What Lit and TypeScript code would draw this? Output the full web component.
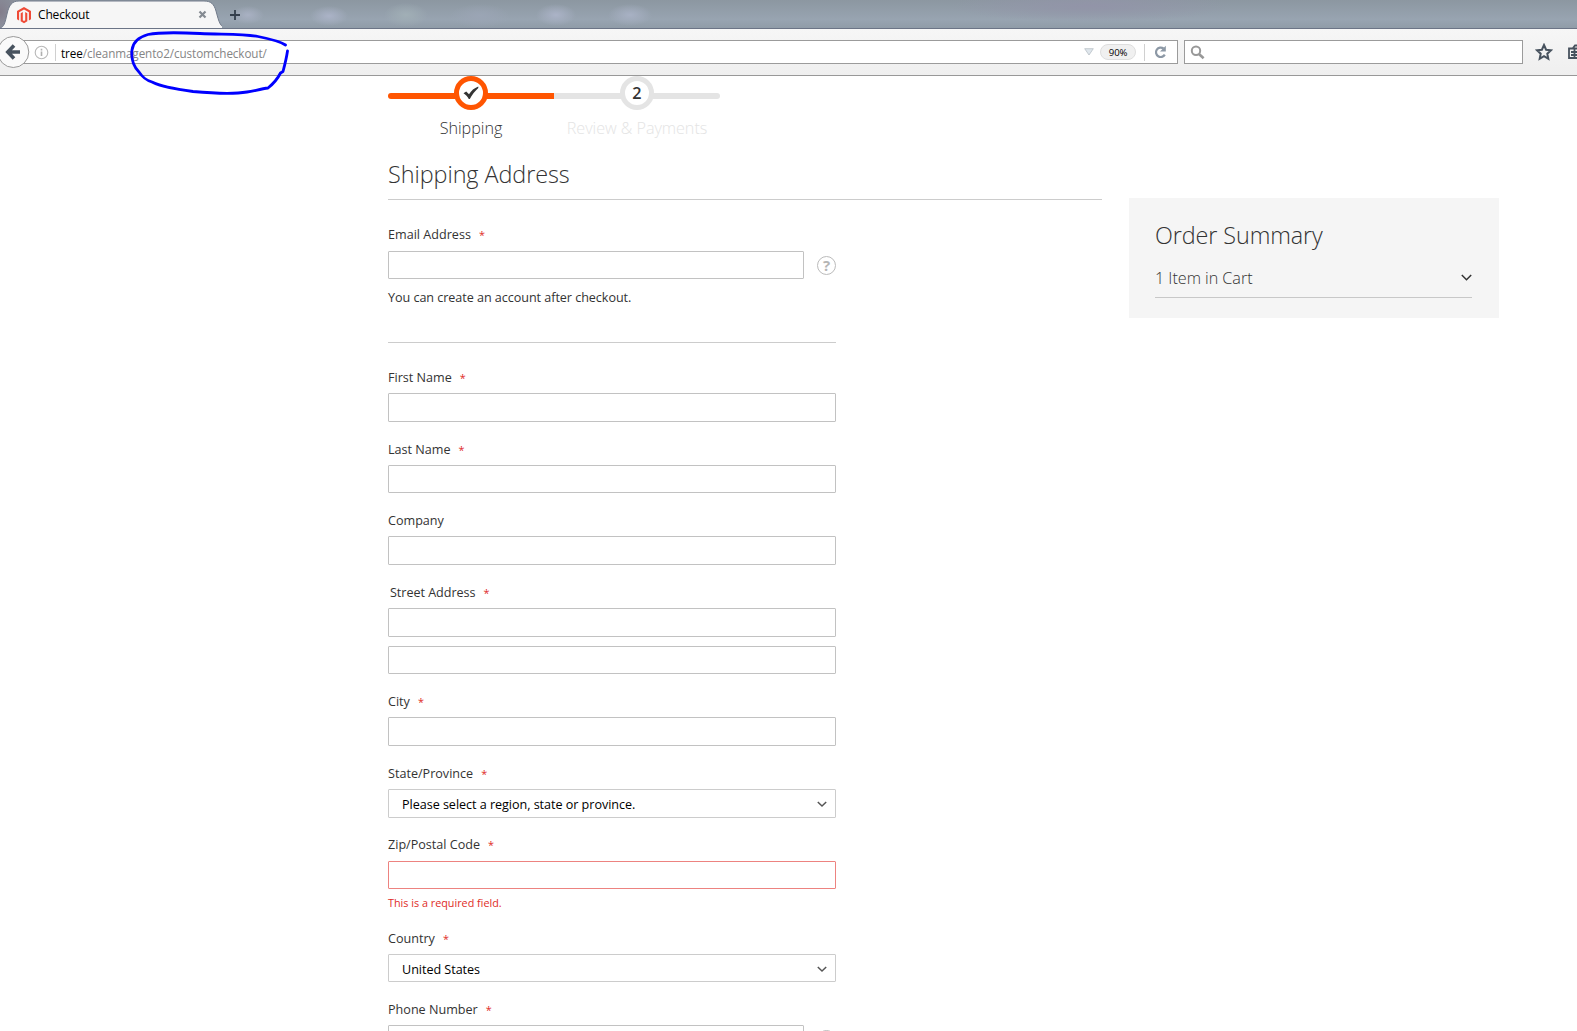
import { LitElement, html, css, nothing } from "lit";
import { customElement, property } from "lit/decorators.js";

@customElement("browser-chrome")
class BrowserChrome extends LitElement {
  static styles = css`
    :host { display: block; font-family: "Open Sans", "Noto Sans", sans-serif; font-size: 12px; color: #000; }
    .tabs {
      height: 28px; display: flex; overflow: hidden; border-bottom: 1px solid #6b7486;
      background:
        radial-gradient(ellipse 16px 9px at 248px 15px, #a9b1c3, transparent),
        radial-gradient(ellipse 19px 10px at 329px 16px, #abb3c7, transparent),
        radial-gradient(ellipse 22px 12px at 406px 15px, #a1afb6, transparent),
        radial-gradient(ellipse 30px 12px at 480px 16px, #9ba5b5, transparent),
        radial-gradient(ellipse 20px 11px at 556px 15px, #abb3c7, transparent),
        radial-gradient(ellipse 22px 11px at 630px 15px, #a8b1c4, transparent),
        radial-gradient(ellipse 140px 16px at 1090px 6px, #9294a8, transparent),
        radial-gradient(ellipse 24px 28px at 0px 12px, #827d8b, transparent),
        linear-gradient(#8c97a1, #98a4b1 70%, #909ca8);
    }
    .tab { width: 222px; height: 29px; flex: none; display: grid; }
    .tab > * { grid-area: 1 / 1; }
    .tabrow { display: flex; align-items: center; padding: 1px 15px 0 16px; height: 28px; box-sizing: border-box; z-index: 1; }
    .tabname { margin-left: 6px; flex: 1; letter-spacing: -0.15px; line-height: 18px; }
    .plus { margin: 9px 0 0 7px; }
    .bar {
      height: 46px; display: flex; align-items: center; border-bottom: 1px solid #989898;
      background: linear-gradient(#f6f6f6, #efefef); overflow: hidden;
    }
    .back { flex: none; margin-left: -4px; width: 34px; height: 34px; z-index: 1; }
    .url {
      flex: none; width: 1160px; height: 24px; box-sizing: border-box; margin-left: -12px; padding-left: 15px;
      border: 1px solid #9b9b9b; background: #fff; display: flex; align-items: center;
    }
    .sep { width: 1px; height: 17px; background: #d0d0d0; }
    .lead { margin-left: 6px; }
    .address { margin-left: 5px; padding-top: 1px; flex: 1; color: #858585; font-size: 11.7px; letter-spacing: -0.09px; white-space: nowrap; }
    .address b { font-weight: 400; color: #000; }
    .zoom {
      box-sizing: border-box; width: 36px; height: 16px; border: 1px solid #dedede; border-radius: 8px; background: #f0f0f0;
      font-size: 9.6px; line-height: 15px; text-align: center; letter-spacing: -0.2px; margin: 0 8px 0 6px;
    }
    .reload { margin: 0 9px 0 8px; }
    .search {
      flex: none; margin-left: 6px; width: 339px; height: 24px; box-sizing: border-box; border: 1px solid #9b9b9b;
      background: #fff; display: flex; align-items: center; padding-left: 5px;
    }
    .star { flex: none; margin: 0 7px 0 12px; }
    .clip { flex: none; margin-left: 8px; }
    svg { display: block; }
  `;
  render() {
    return html`
      <div class="tabs">
        <div class="tab">
          <svg width="222" height="29">
            <path d="M0 29V28C4 27 5 23 7 14C9 5 12 1 19 1H204C211 1 214 4 216 11C219 22 220 28 228 28.500V29Z" fill="#f6f6f6" stroke="#727b8b"/>
          </svg>
          <div class="tabrow">
            <svg width="16" height="18" viewBox="16 6 16 18">
              <path d="M24 7L31 11V19.300L28.900 20.500V12.200L24 9.400L19.100 12.200V20.500L17 19.300V11Z" fill="#ef4a36"/>
              <path d="M20.700 13.200L22.800 12V20.300L24 21L25.200 20.300V12L27.300 13.200V21.300L24 23.200L20.700 21.300Z" fill="#ef4a36"/>
            </svg>
            <span class="tabname">Checkout</span>
            <svg width="9" height="9"><path d="M1.500 1.500L7.500 7.500M7.500 1.500L1.500 7.500" stroke="#848a91" stroke-width="2.200"/></svg>
          </div>
        </div>
        <svg class="plus" width="12" height="12"><path d="M6 1V11M1 6H11" stroke="#343f4c" stroke-width="1.800"/></svg>
      </div>
      <div class="bar">
        <svg class="back" viewBox="0 0 34 34">
          <circle cx="17.300" cy="17" r="15.500" fill="#fafafa" stroke="#9a9a9a"/>
          <path d="M18 10.500L11.800 17L18 23.500M12.500 17H24" fill="none" stroke="#48535f" stroke-width="3.600"/>
        </svg>
        <div class="url">
          <svg width="15" height="15"><circle cx="7.500" cy="7.500" r="6.300" fill="none" stroke="#b8b8b8" stroke-width="1.100"/><path d="M7.500 6.500V11M7.500 3.800V5.400" stroke="#b0b0b0" stroke-width="1.600"/></svg>
          <div class="sep lead"></div>
          <span class="address"><b>tree</b>/cleanmagento2/customcheckout/</span>
          <svg width="10" height="8"><path d="M.7 .7H9.300L5 7Z" fill="#dfe6ec" stroke="#b8bfc5" stroke-width=".8"/></svg>
          <span class="zoom">90%</span>
          <div class="sep"></div>
          <svg class="reload" width="15" height="14"><path d="M11.800 9.600A4.700 4.700 0 1 1 10.500 3.500" fill="none" stroke="#8c98a5" stroke-width="2.200"/><path d="M12.800 .8V6.600H7Z" fill="#8c98a5"/></svg>
        </div>
        <div class="search">
          <svg width="15" height="15"><circle cx="6" cy="5.800" r="4.200" fill="none" stroke="#989898" stroke-width="2"/><path d="M9 9L13.600 13.300" stroke="#989898" stroke-width="2.600"/></svg>
        </div>
        <svg class="star" width="18" height="18"><path d="M9 2L11.100 6.700L16 7.200L12.300 10.700L13.300 15.800L9 13.200L4.700 15.800L5.700 10.700L2 7.200L6.900 6.700Z" fill="none" stroke="#47525e" stroke-width="2"/></svg>
        <div class="sep"></div>
        <svg class="clip" width="16" height="16"><path d="M1 4.500H14V14H1ZM3 8H14M3 11H14M6.500 5V14M5 4L7 1.500H10" fill="none" stroke="#47525e" stroke-width="1.800"/></svg>
      </div>`;
  }
}

@customElement("checkout-field")
class CheckoutField extends LitElement {
  @property() label = "";
  @property({ type: Boolean }) required = false;
  @property({ type: Boolean }) tall = false;
  @property({ type: Boolean }) raised = false;
  @property({ type: Boolean }) second = false;
  @property({ type: Boolean }) legend = false;
  @property() value = "";
  @property() error = "";
  static styles = css`
    :host { display: block; font-family: "Open Sans", sans-serif; font-size: 12.6px; color: #333; }
    .label { line-height: 18px; height: 18px; padding: 1px 0 6px; }
    .raised { padding: 0 0 7px; }
    .legend { padding-left: 2px; letter-spacing: -0.04px; }
    .star { color: #e02b27; font-size: 10.8px; margin-left: 8px; }
    .row { display: flex; align-items: center; gap: 13px; }
    .box {
      flex: 1; box-sizing: border-box; height: 28px; border: 1px solid #c2c2c2; border-radius: 1px; background: #fff;
      display: flex; align-items: center; justify-content: space-between; padding: 2px 8px 0 13px; color: #000; letter-spacing: -0.04px;
    }
    .tall { height: 29px; padding-top: 1px; }
    .select { border-color: #ccc; }
    .bad { border-color: #ed8380; }
    .extra { margin-top: 9px; }
    .error { color: #e02b27; font-size: 10.8px; line-height: 16px; padding-top: 6px; }
    svg { display: block; }
  `;
  render() {
    const cls = `box ${this.tall ? "tall" : ""} ${this.value ? "select" : ""} ${this.error ? "bad" : ""}`;
    return html`
      <div class="label ${this.legend ? "legend" : ""} ${this.raised ? "raised" : ""}">${this.label}${this.required ? html`<span class="star">*</span>` : nothing}</div>
      <div class="row">
        <div class=${cls}>${this.value
          ? html`<span>${this.value}</span><svg width="10" height="7"><path d="M.8 1L5 5L9.200 1" fill="none" stroke="#555" stroke-width="1.500"/></svg>`
          : nothing}</div>
        <slot></slot>
      </div>
      ${this.second ? html`<div class="box extra"></div>` : nothing}
      ${this.error ? html`<div class="error">${this.error}</div>` : nothing}`;
  }
}

@customElement("app-root")
class AppRoot extends LitElement {
  static styles = css`
    :host { display: block; position: relative; width: 1577px; height: 1031px; overflow: hidden; background: #fff; font-family: "Open Sans", sans-serif; color: #333; }
    .page { display: flex; padding-left: 388px; align-items: flex-start; }
    .main { width: 714px; }
    .steps { display: flex; height: 68px; margin-bottom: 16px; }
    .step { width: 166px; display: flex; flex-direction: column; align-items: center; font-size: 16.2px; font-weight: 300; }
    .track { width: 166px; height: 34px; display: grid; justify-items: center; align-items: center; }
    .track > * { grid-area: 1 / 1; }
    .line { width: 100%; height: 6px; margin-top: 6px; background: #e4e4e4; border-radius: 0 6px 6px 0; }
    .dot { box-sizing: border-box; width: 34px; height: 34px; border: 5px solid #e4e4e4; background: #fff; border-radius: 50%; display: grid; place-items: center; font-weight: 600; font-size: 16.200px; line-height: 22px; }
    .on .line { background: #ff5501; border-radius: 6px 0 0 6px; }
    .on .dot { border-color: #ff5501; }
    .name { line-height: 22px; margin-top: 7px; white-space: nowrap; letter-spacing: -0.05px; }
    .todo .name { color: #e4e4e4; }
    h1 { font-weight: 300; font-size: 23.400px; letter-spacing: -0.06px; line-height: 28px; margin: 0; padding-bottom: 11px; border-bottom: 1px solid #ccc; }
    .form { width: 448px; display: flex; flex-direction: column; gap: 18px; }
    .email { padding-top: 26px; height: 143px; box-sizing: border-box; border-bottom: 1px solid #ccc; margin-bottom: 7px; }
    .note { font-size: 12.600px; line-height: 18px; margin-top: 10px; letter-spacing: -0.05px; }
    .help {
      box-sizing: border-box; width: 19px; height: 19px; flex: none; border: 1.500px solid #bbb; border-radius: 50%;
      color: #b5b5b5; font-weight: 700; font-size: 15px; line-height: 17px; text-align: center;
    }
    .summary { margin: 122px 0 0 27px; width: 370px; height: 120px; box-sizing: border-box; background: #f5f5f5; padding: 21px 27px 0 26px; }
    .title { font-size: 23.400px; font-weight: 300; line-height: 32px; letter-spacing: -0.1px; }
    .cart { display: flex; justify-content: space-between; align-items: center; font-size: 16.200px; letter-spacing: -0.04px; font-weight: 300; line-height: 24px; height: 47px; box-sizing: border-box; padding: 7px 0 0; border-bottom: 1px solid #c8c8c8; }
    .ink { position: absolute; left: 0; top: 0; pointer-events: none; z-index: 2; }
    svg { display: block; }
  `;
  render() {
    return html`
      <browser-chrome></browser-chrome>
      <div class="page">
        <div class="main">
          <div class="steps">
            <div class="step on">
              <div class="track"><div class="line"></div><div class="dot">
                <svg width="16" height="14"><path d="M.5 7.200L3.200 5.400L6 8.300C8.500 4.600 11 2.300 15.300 .6V2C12 5 9 8.800 6.800 13H5.800C4.500 10.600 2.800 8.600 .5 7.200Z" fill="#333"/></svg>
              </div></div>
              <div class="name">Shipping</div>
            </div>
            <div class="step todo">
              <div class="track"><div class="line"></div><div class="dot">2</div></div>
              <div class="name">Review &amp; Payments</div>
            </div>
          </div>
          <h1>Shipping Address</h1>
          <div class="form">
            <div class="email">
              <checkout-field label="Email Address" required raised><div class="help">?</div></checkout-field>
              <div class="note">You can create an account after checkout.</div>
            </div>
            <checkout-field label="First Name" required tall></checkout-field>
            <checkout-field label="Last Name" required></checkout-field>
            <checkout-field label="Company" tall></checkout-field>
            <checkout-field label="Street Address" required tall legend second></checkout-field>
            <checkout-field label="City" required tall></checkout-field>
            <checkout-field label="State/Province" required tall value="Please select a region, state or province."></checkout-field>
            <checkout-field label="Zip/Postal Code" required raised error="This is a required field."></checkout-field>
            <checkout-field label="Country" required value="United States"></checkout-field>
            <checkout-field label="Phone Number" required><div class="help"></div></checkout-field>
          </div>
        </div>
        <div class="summary">
          <div class="title">Order Summary</div>
          <div class="cart"><span>1 Item in Cart</span><svg width="11" height="8"><path d="M.8 1L5.500 5.700L10.200 1" fill="none" stroke="#333" stroke-width="1.500"/></svg></div>
        </div>
      </div>
      <svg class="ink" width="300" height="100">
        <path d="M285.500 45C281 42 273 39.500 258 36.500C245 34 228 34.500 200 33.500C180 32.500 160 32 148 34.500C139 37 133 42 132 50C131 59 133 66 139 72C143 78 146 80 152 82C162 87 175 89 193 91.500C215 93.500 235 94 247 92C255 90.500 262 89 268 88C273 84 278 78 280.500 73L283 71.500C285 64 286.500 58 287.500 51" fill="none" stroke="#00f" stroke-width="2.800" stroke-linecap="round" stroke-linejoin="round"/>
      </svg>`;
  }
}
